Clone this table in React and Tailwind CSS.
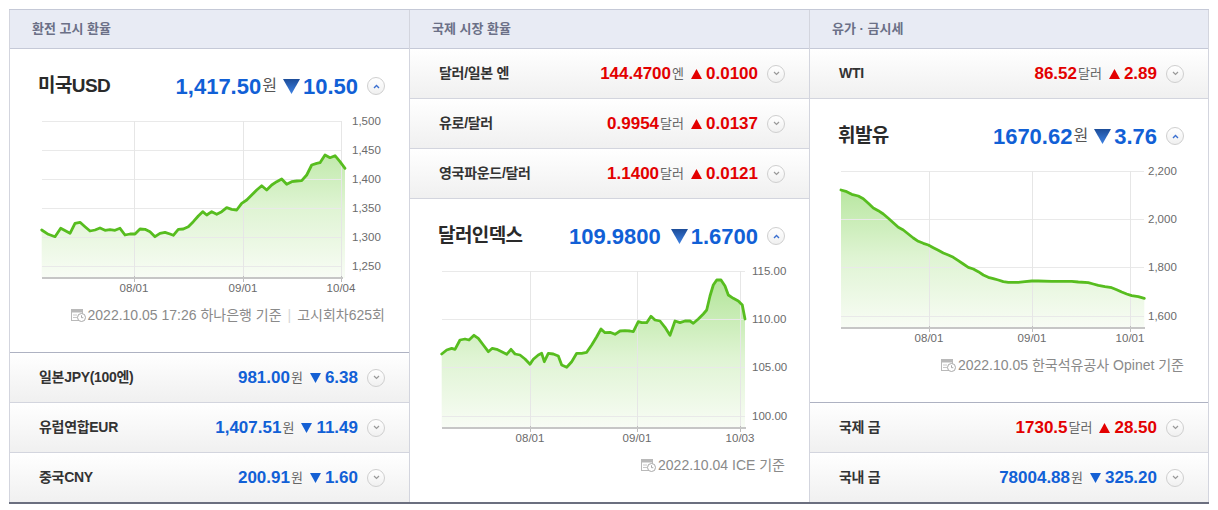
import React from "react";

const BLUE = "text-[#1160d6]";
const RED = "text-[#e30000]";

// line points, read off the screenshot at 3x
const usdData = [
  [65, 390], [85, 403], [105, 410], [122, 385], [150, 400], [165, 370], [180, 367], [195, 380],
  [210, 393], [225, 390], [240, 384], [255, 391], [270, 389], [285, 391], [300, 385], [315, 405],
  [330, 402], [345, 402], [360, 387], [375, 388], [390, 395], [405, 410], [420, 400], [435, 397],
  [450, 402], [460, 406], [475, 388], [490, 387], [505, 380], [520, 365], [535, 348], [548, 335],
  [560, 345], [575, 335], [590, 343], [605, 335], [620, 323], [635, 328], [650, 330], [665, 310],
  [680, 300], [695, 285], [710, 270], [725, 257], [740, 270], [755, 255], [770, 245], [785, 237],
  [800, 253], [815, 245], [830, 243], [845, 242], [860, 225], [875, 195], [890, 190], [900, 188],
  [915, 165], [930, 173], [945, 167], [960, 185], [975, 205],
];

const dxyData = [
  [110, 312], [125, 300], [140, 295], [150, 298], [165, 270], [180, 267], [192, 270], [207, 256],
  [220, 265], [235, 285], [250, 305], [262, 295], [275, 298], [290, 305], [305, 313], [318, 298],
  [330, 312], [345, 315], [360, 327], [375, 343], [385, 328], [400, 315], [410, 310], [418, 335],
  [430, 310], [445, 312], [460, 318], [470, 345], [485, 352], [500, 335], [515, 310], [530, 310],
  [545, 307], [560, 285], [575, 260], [588, 237], [600, 248], [615, 247], [630, 253], [645, 243],
  [660, 242], [675, 243], [685, 245], [700, 215], [710, 218], [725, 218], [738, 199], [750, 210],
  [765, 213], [780, 232], [795, 256], [810, 213], [825, 218], [840, 213], [855, 213], [865, 220],
  [880, 207], [895, 192], [905, 180], [915, 138], [925, 105], [935, 90], [948, 90], [960, 108],
  [970, 135], [985, 145], [1000, 153], [1012, 165], [1020, 207],
];

const oilData = [
  [108, 120], [125, 125], [140, 133], [160, 138], [175, 146], [190, 160], [205, 174], [220, 182],
  [235, 192], [250, 205], [265, 218], [280, 232], [295, 240], [310, 252], [325, 264], [340, 274],
  [355, 280], [370, 285], [385, 293], [400, 301], [415, 309], [430, 315], [445, 322], [460, 332],
  [475, 342], [490, 352], [505, 357], [520, 365], [535, 375], [550, 382], [565, 386], [580, 390],
  [595, 395], [610, 397], [640, 397], [660, 395], [680, 393], [700, 393], [740, 394], [780, 394],
  [800, 394], [820, 396], [850, 398], [865, 402], [880, 406], [900, 410], [920, 413], [935, 419],
  [950, 426], [965, 432], [980, 437], [1000, 440], [1018, 445],
];

const TriDown = ({ big }) =>
  big ? (
    <svg width="17" height="16" viewBox="0 0 17 16" className="shrink-0">
      <defs>
        <linearGradient id="tdg" x1="0" y1="0" x2="0" y2="1">
          <stop offset="0" stopColor="#1c4c98" />
          <stop offset="1" stopColor="#3e82e4" />
        </linearGradient>
      </defs>
      <polygon points="0,1 17,1 8.5,16" fill="url(#tdg)" />
    </svg>
  ) : (
    <svg width="11" height="10" viewBox="0 0 11 10" className="shrink-0">
      <polygon points="0,0 11,0 5.5,10" fill="#1560d4" />
    </svg>
  );

const TriUp = () => (
  <svg width="11" height="10" viewBox="0 0 11 10" className="shrink-0">
    <polygon points="0,10 11,10 5.5,0" fill="#e30000" />
  </svg>
);

const CircleBtn = ({ up }) => (
  <span className="ml-[9px] w-[18px] h-[18px] rounded-full border border-[#cfcfcf] bg-linear-to-b from-white to-[#f0f0f0] flex items-center justify-center shrink-0">
    <svg width="7" height="5" viewBox="0 0 7 5">
      {up ? (
        <polyline points="1,4 3.5,1.5 6,4" fill="none" stroke="#3a6fd0" strokeWidth="1.4" />
      ) : (
        <polyline points="1,1 3.5,3.5 6,1" fill="none" stroke="#999" strokeWidth="1.2" />
      )}
    </svg>
  </span>
);

const CalIcon = () => (
  <svg width="15" height="14" viewBox="0 0 15 14" className="shrink-0 mr-[2px]">
    <rect x="0.5" y="1.5" width="11" height="11" fill="#fff" stroke="#b9b9b9" />
    <rect x="0.5" y="1.5" width="11" height="3" fill="#b9b9b9" />
    <line x1="2" y1="7" x2="6" y2="7" stroke="#c8c8c8" />
    <line x1="2" y1="9.5" x2="6" y2="9.5" stroke="#c8c8c8" />
    <circle cx="10.5" cy="9.5" r="4" fill="#fff" stroke="#a9a9a9" />
    <polyline points="10.5,7.3 10.5,9.7 12.3,9.7" fill="none" stroke="#a9a9a9" />
  </svg>
);

function Chart({ id, data, dx, left, right, yTicks, xTicks, labelX }) {
  const pts = data.map(([x, y]) => [x / 3 + dx, y / 3 - 10]);
  const line = pts.map((p) => p[0].toFixed(1) + "," + p[1].toFixed(1)).join(" ");
  const area = `${pts[0][0].toFixed(1)},168 ${line} ${pts[pts.length - 1][0].toFixed(1)},168`;
  return (
    <svg width="398" height="190" className="block">
      <defs>
        <linearGradient id={id} x1="0" y1="11" x2="0" y2="168" gradientUnits="userSpaceOnUse">
          <stop offset="0" stopColor="#aee393" />
          <stop offset="0.55" stopColor="#dff4d3" />
          <stop offset="1" stopColor="#f8fcf5" />
        </linearGradient>
      </defs>
      <polygon points={area} fill={`url(#${id})`} />
      {yTicks.map(([y, label]) => (
        <g key={label}>
          <line x1={left} x2={right} y1={y + 0.5} y2={y + 0.5} stroke="#e9e9e9" />
          <text x={labelX} y={y + 4} fontSize="11.5" fill="#6b6b6b" fontFamily="Liberation Sans, sans-serif">
            {label}
          </text>
        </g>
      ))}
      {xTicks.map(([x, label]) => (
        <g key={label}>
          <line x1={x + 0.5} x2={x + 0.5} y1={11} y2={172} stroke="#e6e6e6" />
          <line x1={x + 0.5} x2={x + 0.5} y1={166} y2={172} stroke="#bdbdbd" />
          <text x={x} y={182} fontSize="11.5" fill="#6b6b6b" textAnchor="middle" fontFamily="Liberation Sans, sans-serif">
            {label}
          </text>
        </g>
      ))}
      <polyline points={line} fill="none" stroke="#57bd1f" strokeWidth="2.8" strokeLinejoin="round" strokeLinecap="round" />
      <line x1={left} x2={right + 1} y1={168} y2={168} stroke="#c6c6c6" strokeWidth="2" />
    </svg>
  );
}

function Row({ label, value, unit, change, up }) {
  const color = up ? RED : BLUE;
  return (
    <div className="h-[50px] last:h-[49px] flex items-center justify-between pl-[29px] pr-[24px] border-b border-[#d3d5de] last:border-b-0 bg-linear-to-b from-white to-[#f0f0f0]">
      <span className="text-[14px] font-bold text-[#333] tracking-[-0.3px]">{label}</span>
      <div className="flex items-center">
        <span className={`text-[17px] font-bold ${color}`}>{value}</span>
        {unit && <span className="text-[13px] text-[#666] ml-[1px]">{unit}</span>}
        <span className="ml-[7px] flex items-center">{up ? <TriUp /> : <TriDown />}</span>
        <span className={`ml-[4px] text-[17px] font-bold ${color}`}>{change}</span>
        <CircleBtn />
      </div>
    </div>
  );
}

function Main({ title, value, unit, change, chart, note }) {
  return (
    <div className="h-[304px] last:h-[303px] border-b border-[#aeb2c2] last:border-b-0 bg-white">
      <div className="h-[61px] pt-[13px] pl-[28px] pr-[24px] flex items-center justify-between">
        <span className="text-[19px] font-semibold text-[#2a2a2a] tracking-[-0.6px]">{title}</span>
        <div className="flex items-center">
          <span className={`text-[22px] font-bold ${BLUE}`}>{value}</span>
          {unit ? (
            <span className="text-[16px] text-[#555] ml-[1px]">{unit}</span>
          ) : (
            <span className="w-[4px]" />
          )}
          <span className="ml-[6px] flex items-center">
            <TriDown big />
          </span>
          <span className={`ml-[3px] text-[22px] font-bold ${BLUE}`}>{change}</span>
          <CircleBtn up />
        </div>
      </div>
      {chart}
      <div className="mt-[5px] h-[20px] pr-[24px] flex items-center justify-end text-[14px] text-[#8a8a8a]">
        <CalIcon />
        {note}
      </div>
    </div>
  );
}

function Header({ children }) {
  return (
    <div className="h-[39px] flex items-center pl-[22px] bg-[#e8ebf4] border-b border-[#c5c9d7] text-[13px] font-bold text-[#6b7087]">
      {children}
    </div>
  );
}

export default function App() {
  return (
    <div className="bg-white w-[1218px] h-[510px] pt-[9px] pl-[9px] font-['Liberation_Sans','Noto_Sans_CJK_KR',sans-serif]">
      <div className="flex w-fit border-t border-[#c5c9d7] border-b-2 border-b-[#6b6f7f]">
        <div className="w-[400px] border-l border-[#d3d5de] flex flex-col">
          <Header>환전 고시 환율</Header>
          <Main
            title="미국USD"
            value="1,417.50"
            unit="원"
            change="10.50"
            chart={
              <Chart
                id="g1"
                data={usdData}
                dx={10}
                left={32}
                right={332}
                labelX={342}
                yTicks={[[11, "1,500"], [40, "1,450"], [69, "1,400"], [98, "1,350"], [127, "1,300"], [156, "1,250"]]}
                xTicks={[[124, "08/01"], [233, "09/01"], [331, "10/04"]]}
              />
            }
            note={
              <>
                <span>2022.10.05 17:26 하나은행 기준</span>
                <span className="mx-[6px] text-[#d6d6d6]">|</span>
                <span>고시회차625회</span>
              </>
            }
          />
          <Row label="일본JPY(100엔)" value="981.00" unit="원" change="6.38" />
          <Row label="유럽연합EUR" value="1,407.51" unit="원" change="11.49" />
          <Row label="중국CNY" value="200.91" unit="원" change="1.60" />
        </div>

        <div className="w-[400px] border-l border-[#d3d5de] flex flex-col">
          <Header>국제 시장 환율</Header>
          <Row label="달러/일본 엔" value="144.4700" unit="엔" change="0.0100" up />
          <Row label="유로/달러" value="0.9954" unit="달러" change="0.0137" up />
          <Row label="영국파운드/달러" value="1.1400" unit="달러" change="0.0121" up />
          <Main
            title="달러인덱스"
            value="109.9800"
            change="1.6700"
            chart={
              <Chart
                id="g2"
                data={dxyData}
                dx={-5}
                left={32}
                right={335}
                labelX={342}
                yTicks={[[11, "115.00"], [59, "110.00"], [107, "105.00"], [156, "100.00"]]}
                xTicks={[[120, "08/01"], [227, "09/01"], [330, "10/03"]]}
              />
            }
            note={<span>2022.10.04 ICE 기준</span>}
          />
        </div>

        <div className="w-[400px] border-l border-r border-[#d3d5de] flex flex-col">
          <Header>유가 · 금시세</Header>
          <Row label="WTI" value="86.52" unit="달러" change="2.89" up />
          <Main
            title="휘발유"
            value="1670.62"
            unit="원"
            change="3.76"
            chart={
              <Chart
                id="g3"
                data={oilData}
                dx={-5}
                left={31}
                right={334}
                labelX={338}
                yTicks={[[11, "2,200"], [59, "2,000"], [107, "1,800"], [156, "1,600"]]}
                xTicks={[[119, "08/01"], [222, "09/01"], [320, "10/01"]]}
              />
            }
            note={<span>2022.10.05 한국석유공사 Opinet 기준</span>}
          />
          <Row label="국제 금" value="1730.5" unit="달러" change="28.50" up />
          <Row label="국내 금" value="78004.88" unit="원" change="325.20" />
        </div>
      </div>
    </div>
  );
}
